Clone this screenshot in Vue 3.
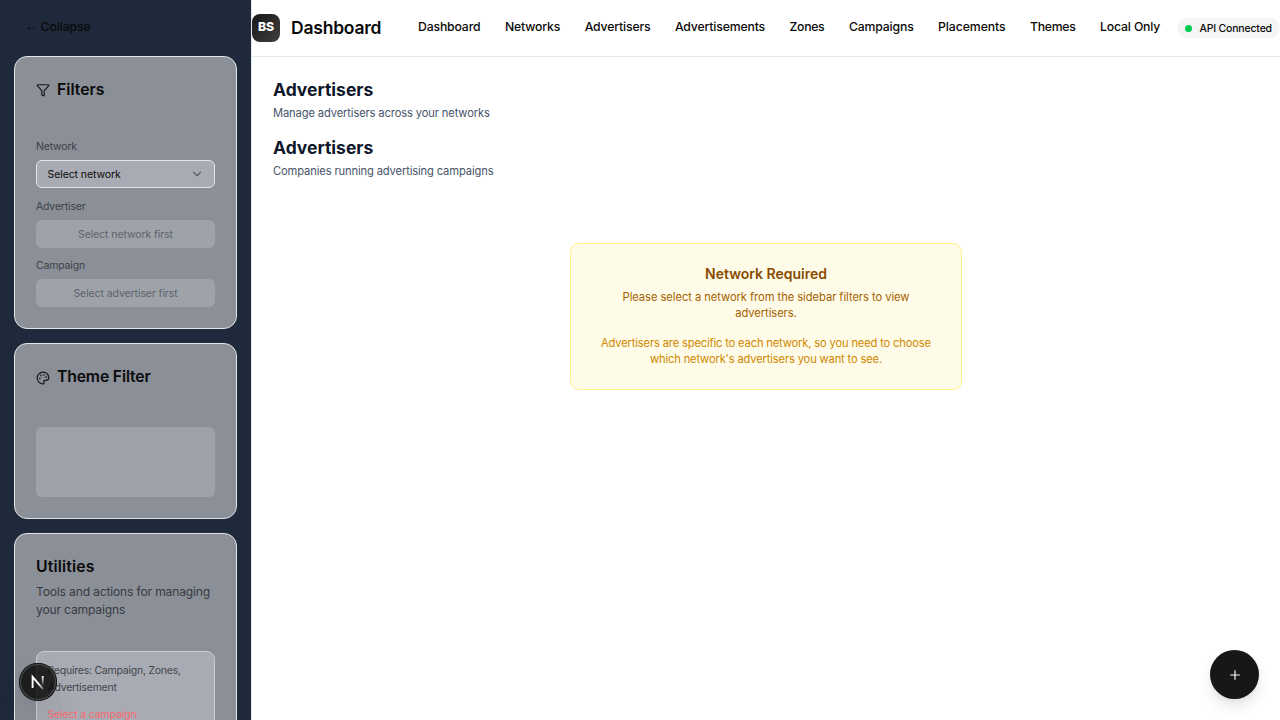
<script setup>
const links = ['Dashboard', 'Networks', 'Advertisers', 'Advertisements', 'Zones', 'Campaigns', 'Placements', 'Themes', 'Local Only']
</script>

<template>
  <div class="app">
    <aside class="sidebar">
      <div class="collapse"><span class="arrow">←</span>Collapse</div>
      <section class="card filters">
        <h2 class="card-title">
          <svg class="icon" viewBox="0 0 24 24"><path d="M10 20a1 1 0 0 0 .553.895l2 1A1 1 0 0 0 14 21v-7a2 2 0 0 1 .517-1.341L21.74 4.67A1 1 0 0 0 21 3H3a1 1 0 0 0-.742 1.67l7.225 7.989A2 2 0 0 1 10 14z" /></svg>
          <span>Filters</span>
        </h2>
        <div class="fields">
          <div class="field">
            <label>Network</label>
            <div class="select">
              <span>Select network</span>
              <svg class="chevron" viewBox="0 0 24 24"><path d="m6 9 6 6 6-6" /></svg>
            </div>
          </div>
          <div class="field">
            <label>Advertiser</label>
            <div class="disabled">Select network first</div>
          </div>
          <div class="field">
            <label>Campaign</label>
            <div class="disabled">Select advertiser first</div>
          </div>
        </div>
      </section>
      <section class="card theme">
        <h2 class="card-title tight">
          <svg class="icon" viewBox="0 0 24 24"><path d="M12 22a1 1 0 0 1 0-20 10 9 0 0 1 10 9 5 5 0 0 1-5 5h-2.25a1.75 1.75 0 0 0-1.4 2.8l.3.4a1.75 1.75 0 0 1-1.4 2.8z" /><circle cx="13.5" cy="6.5" r=".5" /><circle cx="17.5" cy="10.5" r=".5" /><circle cx="6.5" cy="12.5" r=".5" /><circle cx="8.5" cy="7.5" r=".5" /></svg>
          <span>Theme Filter</span>
        </h2>
        <div class="placeholder"></div>
      </section>
      <section class="card utilities">
        <h2 class="card-title wide"><span>Utilities</span></h2>
        <p class="desc">Tools and actions for managing<br />your campaigns</p>
        <div class="tool">
          <p class="requires">Requires: Campaign, Zones,<br />Advertisement</p>
          <p class="warning">Select a campaign</p>
        </div>
      </section>
    </aside>

    <div class="content">
      <header class="topbar">
        <div class="logo"><span>BS</span></div>
        <div class="brand">Dashboard</div>
        <nav class="nav">
          <a v-for="link in links" :key="link">{{ link }}</a>
        </nav>
        <div class="status"><i class="dot"></i><span>API Connected</span></div>
      </header>
      <main class="main">
        <h1 class="heading">Advertisers</h1>
        <p class="sub">Manage advertisers across your networks</p>
        <h1 class="heading second">Advertisers</h1>
        <p class="sub">Companies running advertising campaigns</p>
        <div class="notice">
          <h3>Network Required</h3>
          <p class="lead">Please select a network from the sidebar filters to view<br />advertisers.</p>
          <p class="detail">Advertisers are specific to each network, so you need to choose<br />which network's advertisers you want to see.</p>
        </div>
      </main>
    </div>

    <button class="fab"><svg viewBox="0 0 14 14"><path d="M7 2.2v9.6M2.2 7h9.6" /></svg></button>
    <div class="dev-badge">
      <svg viewBox="0 0 38 38">
        <defs>
          <linearGradient id="slant" x1="13" y1="13" x2="25" y2="26" gradientUnits="userSpaceOnUse"><stop offset=".6" stop-color="#fff" /><stop offset="1" stop-color="#fff" stop-opacity=".3" /></linearGradient>
          <linearGradient id="stem" x1="0" y1="13" x2="0" y2="23" gradientUnits="userSpaceOnUse"><stop offset="0" stop-color="#fff" /><stop offset="1" stop-color="#fff" stop-opacity="0" /></linearGradient>
        </defs>
        <path d="M13.6 25V13.8L24 26" stroke="url(#slant)" />
        <path d="M23.7 13V22.5" stroke="url(#stem)" />
      </svg>
    </div>
  </div>
</template>

<style>
body { margin: 0; overflow: hidden; }
</style>
<style scoped>
* { box-sizing: border-box; }
h1, h2, h3, p { margin: 0; }
.app { position: relative; display: flex; width: 1280px; height: 720px; overflow: hidden; background: #fff; color: #0a0a0a; font-family: Inter, "Liberation Sans", sans-serif; white-space: nowrap; }
.sidebar { width: 251px; flex: none; height: 720px; overflow: hidden; background: #1e293b; padding: 14px; display: flex; flex-direction: column; gap: 14px; }
.collapse { height: 28px; flex: none; padding: 0 0 3px 10.5px; display: flex; align-items: center; font-size: 12.25px; font-weight: 500; letter-spacing: -.1px; }
.arrow { width: 16px; font-family: "Liberation Sans", sans-serif; font-size: 13.5px; line-height: 14px; font-weight: 400; letter-spacing: 0; }
.card { flex: none; width: 223px; border: 1px solid #e2e4e7; border-radius: 13px; background: #8b8f97; padding: 21px; }
.filters { height: 273px; }
.theme { height: 176px; }
.utilities { height: 260px; }
.card-title { display: flex; align-items: center; gap: 7px; height: 24px; font-size: 15.75px; font-weight: 600; }
.card-title span { padding-bottom: 2px; }
.tight { letter-spacing: -.16px; }
.wide { letter-spacing: .15px; }
.icon { width: 14px; height: 14px; fill: none; stroke: #171717; stroke-width: 2; stroke-linecap: round; stroke-linejoin: round; }
.theme .icon { margin-top: 2px; }
.fields { display: flex; flex-direction: column; gap: 11.5px; margin-top: 38px; }
.field label { display: block; height: 14px; margin-bottom: 6px; font-size: 10.5px; line-height: 14px; letter-spacing: -.18px; color: #3c3f45; }
.select, .disabled { height: 28px; border-radius: 6px; display: flex; align-items: center; font-size: 10.5px; letter-spacing: -.09px; }
.select { justify-content: space-between; padding: 0 10px 0 10.5px; border: 1px solid #e5e5e5; background: #a8abb3; }
.chevron { width: 14px; height: 14px; fill: none; stroke: #5b5d62; stroke-width: 2; stroke-linecap: round; stroke-linejoin: round; }
.disabled { justify-content: center; padding-top: 1px; background: #9ea2a9; color: #5f6369; }
.placeholder { margin-top: 38px; height: 70px; border-radius: 6px; background: #9ea2a9; }
.desc { font-size: 12.1px; line-height: 17.5px; letter-spacing: -.17px; margin-top: 4px; color: #383b41; }
.tool { margin-top: 33px; height: 100px; border: 1px solid #c9cbd0; border-radius: 8px; background: #a8abb3; padding: 10px 10.5px; font-size: 10.5px; }
.requires { line-height: 17px; letter-spacing: -.24px; color: #44464b; }
.warning { margin-top: 10px; line-height: 17px; letter-spacing: -.15px; color: #fb6a70; }
.content { flex: 1; min-width: 0; border-left: 1px solid #e2e8f0; }
.topbar { height: 57px; border-bottom: 1px solid #e2e8f0; display: flex; align-items: center; }
.logo { flex: none; width: 28px; height: 28px; border-radius: 8px; background: linear-gradient(135deg, #171717, #404040); color: #fff; font-size: 12.25px; font-weight: 800; display: flex; align-items: center; justify-content: center; padding-bottom: 3px; }
.brand { flex: none; width: 127px; padding: 0 0 1px 11px; font-size: 17.5px; font-weight: 600; letter-spacing: -.22px; }
.nav { flex: none; display: flex; gap: 24.5px; margin-left: 11px; padding-bottom: 3px; font-size: 12.25px; font-weight: 500; letter-spacing: -.165px; }
.nav a:nth-child(5), .nav a:nth-child(8) { letter-spacing: -.29px; }
.nav a:nth-child(7) { letter-spacing: -.08px; }
.status { margin-left: auto; flex: none; width: 103px; height: 20px; border-radius: 10px; background: #f5f5f5; display: flex; align-items: center; font-size: 10.5px; padding-left: 8px; gap: 7.5px; font-weight: 500; letter-spacing: -.19px; }
.dot { flex: none; width: 7px; height: 7px; border-radius: 50%; background: #00c950; }
.main { padding: 21px; }
.heading { font-size: 17.5px; line-height: 24px; font-weight: 700; color: #0f172a; }
.sub { font-size: 11.2px; line-height: 16px; letter-spacing: -.14px; margin-top: 3px; color: #475569; }
.second { margin-top: 15px; }
.notice { width: 392px; height: 147px; margin: 64px auto 0; border: 1px solid #fff085; border-radius: 9px; background: #fefce8; text-align: center; padding: 20px 21px; font-size: 11.2px; line-height: 16px; }
.notice h3 { font-size: 14px; line-height: 19px; font-weight: 600; color: #894b00; }
.lead { margin-top: 6px; letter-spacing: -.06px; color: #a65f00; }
.detail { margin-top: 14px; letter-spacing: -.17px; color: #d08700; }
.fab { position: absolute; left: 1210px; top: 650px; width: 49px; height: 49px; padding: 0; border: 0; border-radius: 50%; background: #171717; box-shadow: 0 9px 14px rgba(0,0,0,.08), 0 3px 6px rgba(0,0,0,.05); display: flex; align-items: center; justify-content: center; }
.fab svg { width: 14px; height: 14px; stroke: #fafafa; stroke-width: 1.2; }
.dev-badge { position: absolute; left: 19px; top: 663px; width: 38px; height: 38px; border-radius: 50%; background: rgba(0,0,0,.8); box-shadow: inset 0 0 0 1px #171717, inset 0 0 0 2px #4c4c4c, 0 16px 32px -8px rgba(0,0,0,.24); }
.dev-badge svg { display: block; width: 38px; height: 38px; fill: none; stroke-width: 1.9; }
</style>
